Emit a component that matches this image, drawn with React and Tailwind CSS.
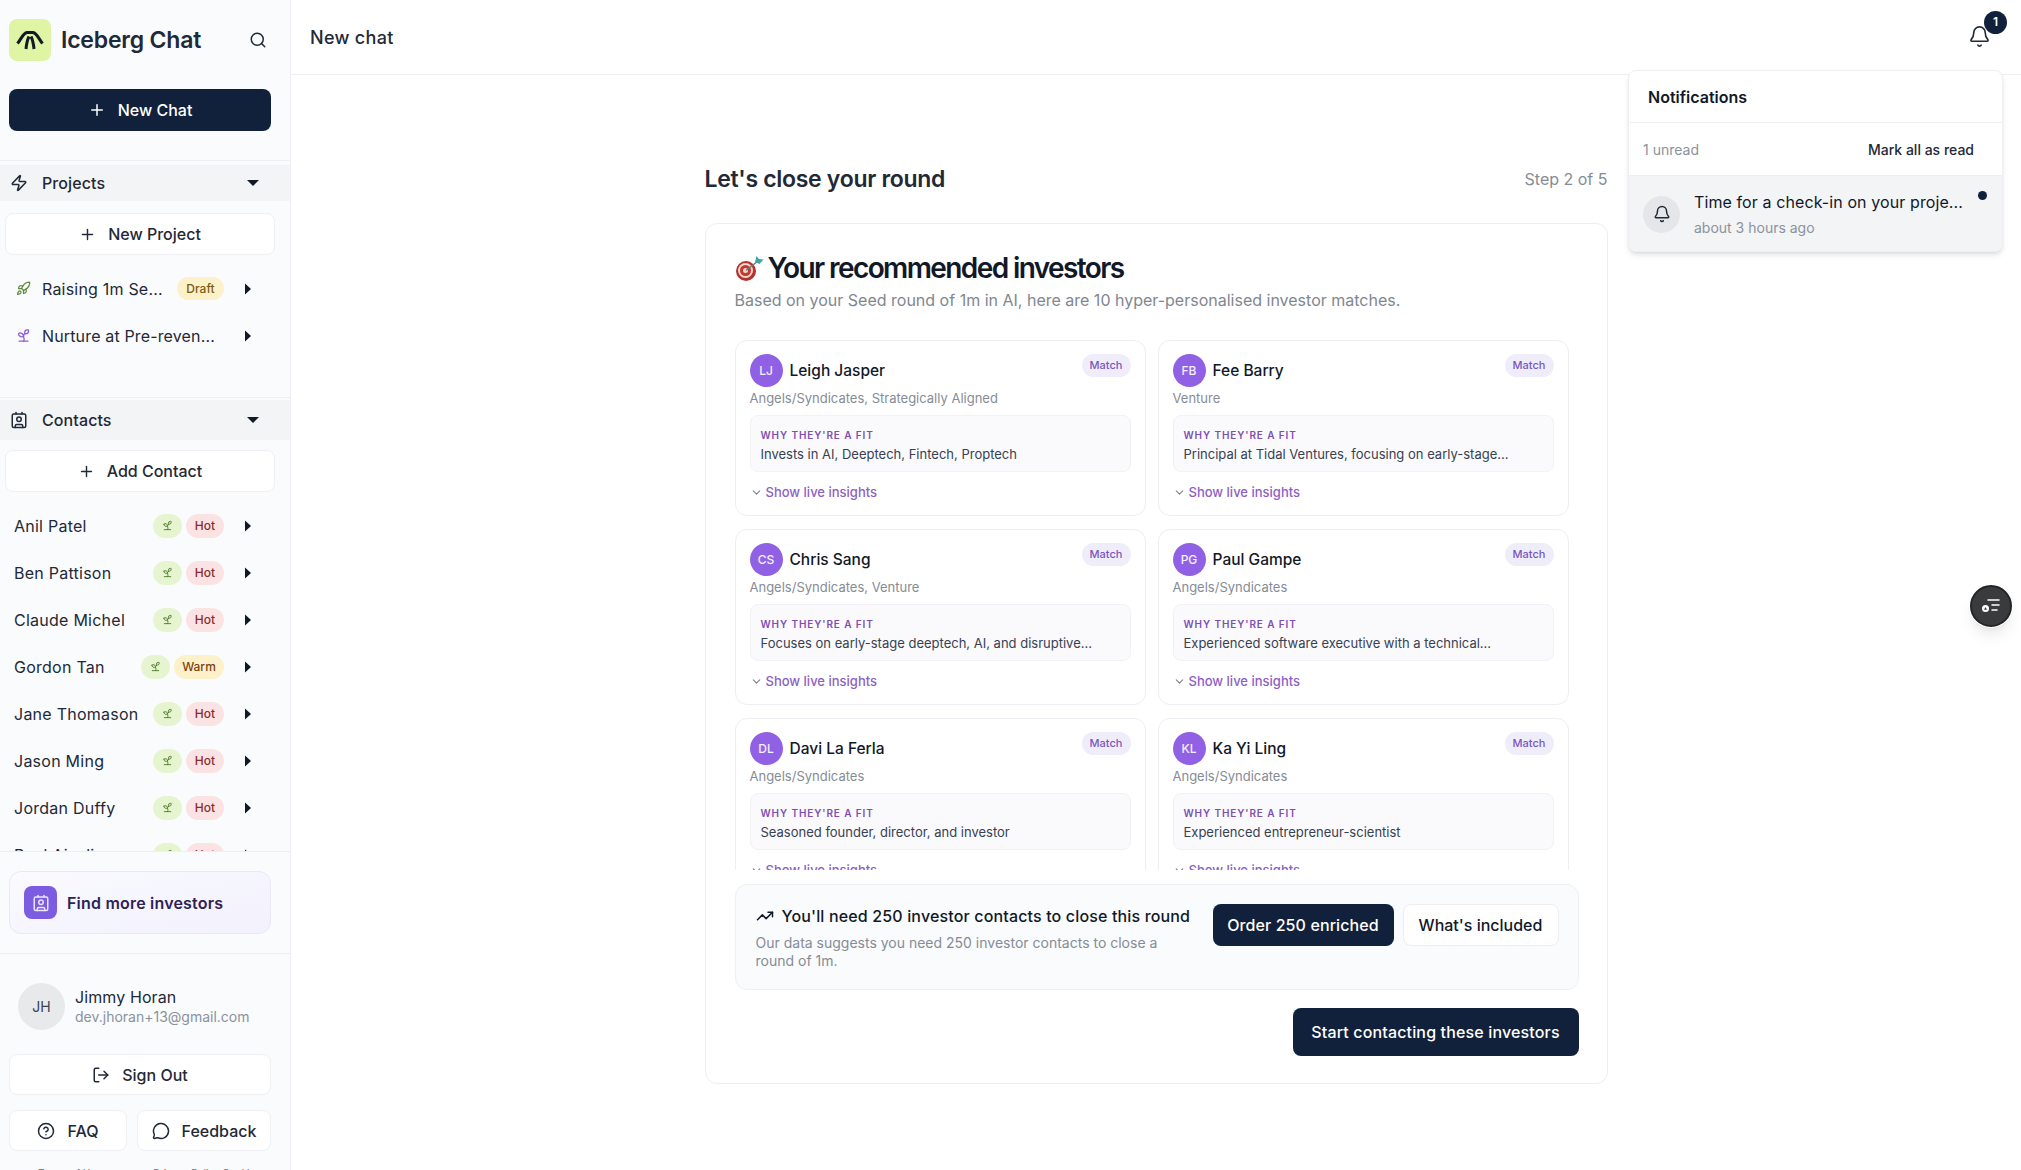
import React from 'react';
import { Search, Plus, Zap, Rocket, Sprout, Contact, LogOut, CircleHelp, MessageCircle, ChevronDown, TrendingUp, Bell } from 'lucide-react';

const contacts = [
  { name: 'Anil Patel', tag: 'Hot' },
  { name: 'Ben Pattison', tag: 'Hot' },
  { name: 'Claude Michel', tag: 'Hot' },
  { name: 'Gordon Tan', tag: 'Warm' },
  { name: 'Jane Thomason', tag: 'Hot' },
  { name: 'Jason Ming', tag: 'Hot' },
  { name: 'Jordan Duffy', tag: 'Hot' },
  { name: 'Paul Ainslie', tag: 'Hot' },
];

const investors = [
  { initials: 'LJ', name: 'Leigh Jasper', type: 'Angels/Syndicates, Strategically Aligned', fit: 'Invests in AI, Deeptech, Fintech, Proptech' },
  { initials: 'FB', name: 'Fee Barry', type: 'Venture', fit: "Principal at Tidal Ventures, focusing on early-stage..." },
  { initials: 'CS', name: 'Chris Sang', type: 'Angels/Syndicates, Venture', fit: 'Focuses on early-stage deeptech, AI, and disruptive...' },
  { initials: 'PG', name: 'Paul Gampe', type: 'Angels/Syndicates', fit: 'Experienced software executive with a technical...' },
  { initials: 'DL', name: 'Davi La Ferla', type: 'Angels/Syndicates', fit: 'Seasoned founder, director, and investor' },
  { initials: 'KL', name: 'Ka Yi Ling', type: 'Angels/Syndicates', fit: 'Experienced entrepreneur-scientist' },
];

function Caret({ down }) {
  return (
    <svg width="12" height="12" viewBox="0 0 12 12" className="shrink-0 text-[#111827]" fill="currentColor">
      {down ? <path d="M0 3h12L6 9z" /> : <path d="M3 .5v11L9 6z" />}
    </svg>
  );
}

function Logo() {
  return (
    <div className="w-[42px] h-[42px] rounded-lg bg-[#dff5a5] flex items-center justify-center shrink-0">
      <svg width="28" height="20" viewBox="0 0 28 20" fill="none" stroke="#111827" strokeWidth="3.200">
        <path d="M1.500 13.500C5 9.500 7 3 11 2.500H17C21 3 23 9.500 26.500 13.500" />
        <path d="M10 19C10.500 13.500 11.500 9.500 13 6.500" strokeWidth="3" />
        <path d="M18 19C17.500 13.500 16.500 9.500 15 6.500" strokeWidth="3" />
      </svg>
    </div>
  );
}

function SectionHead({ icon, label, className }) {
  return (
    <div className={`bg-[#f3f4f6] flex items-center pl-[10px] pr-[31px] text-[#1f2937] ${className}`}>
      {icon}
      <span className="ml-[14px] text-[16px] font-medium flex-1 tracking-[0.1px]">{label}</span>
      <Caret down />
    </div>
  );
}

function OutlineButton({ icon, children, className }) {
  return (
    <button className={`flex items-center justify-center gap-[12px] rounded-lg border border-[#eff0f3] bg-white text-[16px] font-medium text-[#1f2937] ${className}`}>
      {icon}
      {children}
    </button>
  );
}

function ContactRow({ name, tag }) {
  return (
    <div className="h-[47px] shrink-0 flex items-center pl-[14px] pr-[36px]">
      <span className="flex-1 truncate text-[16px] tracking-[0.25px] text-[#1f2937]">{name}</span>
      <span className="w-[29px] h-[24px] rounded-full bg-[#e6f5cf] flex items-center justify-center shrink-0">
        <Sprout size={11} className="text-[#4d7c2a]" />
      </span>
      <span className={`ml-[4px] h-[24px] rounded-full flex items-center justify-center text-[12px] font-medium shrink-0 ${tag === 'Hot' ? 'w-[38px] bg-[#fbe3e3] text-[#8a2b2b]' : 'w-[50px] bg-[#fdf1c9] text-[#7c3f12]'}`}>{tag}</span>
      <span className="ml-[18px]"><Caret /></span>
    </div>
  );
}

function Sidebar() {
  return (
    <aside className="w-[291px] h-full shrink-0 bg-[#fafbfd] border-r border-[#eeeff2] flex flex-col overflow-hidden">
      <div className="flex items-center pl-[9px] pr-[23px] pt-[19px]">
        <Logo />
        <span className="ml-[10px] flex-1 text-[23px] font-semibold text-[#1f2937] tracking-[-0.2px]">Iceberg Chat</span>
        <Search size={18} className="text-[#1f2937]" />
      </div>
      <button className="mt-[28px] ml-[9px] w-[262px] h-[42px] shrink-0 rounded-lg bg-[#12213b] text-white text-[16px] font-medium flex items-center justify-center gap-[12px]">
        <Plus size={18} />New Chat
      </button>

      <div className="mt-[29px] border-t border-[#eeeff2] pt-[4px]">
        <SectionHead icon={<Zap size={18} />} label="Projects" className="h-[36px]" />
      </div>
      <OutlineButton icon={<Plus size={17} />} className="mt-[12px] ml-[5px] w-[270px] h-[42px] shrink-0">New Project</OutlineButton>
      <div className="mt-[10px] pb-[38px]">
        <div className="h-[47px] flex items-center pl-[16px] pr-[36px]">
          <Rocket size={15} className="text-[#5f8a3a] shrink-0" />
          <span className="ml-[11px] flex-1 text-[16px] tracking-[0.2px] text-[#1f2937] whitespace-nowrap">Raising 1m Se...</span>
          <span className="w-[47px] h-[23px] rounded-full bg-[#fdf1c9] text-[#7c5a12] text-[12px] font-medium flex items-center justify-center">Draft</span>
          <span className="ml-[18px]"><Caret /></span>
        </div>
        <div className="h-[47px] flex items-center pl-[16px] pr-[36px]">
          <Sprout size={15} className="text-[#8a5cd6] shrink-0" />
          <span className="ml-[11px] flex-1 text-[16px] tracking-[0.15px] text-[#1f2937] whitespace-nowrap">Nurture at Pre-reven...</span>
          <Caret />
        </div>
      </div>

      <div className="border-t border-[#eeeff2] pt-[2px]">
        <SectionHead icon={<Contact size={18} />} label="Contacts" className="h-[40px]" />
      </div>
      <OutlineButton icon={<Plus size={17} />} className="mt-[10px] ml-[5px] w-[270px] h-[42px] shrink-0">Add Contact</OutlineButton>
      <div className="mt-[10px] flex-1 min-h-0 overflow-hidden flex flex-col">
        {contacts.map((c) => <ContactRow key={c.name} {...c} />)}
      </div>

      <div className="shrink-0 border-t border-[#eeeff2]">
        <div className="ml-[9px] w-[262px] mt-[19px] h-[63px] rounded-xl border border-[#e9e8f3] bg-gradient-to-br from-[#fafaff] to-[#f2f1fd] flex items-center pl-[14px]">
          <span className="w-[33px] h-[33px] rounded-lg bg-[#7c5ce0] flex items-center justify-center">
            <Contact size={18} className="text-[#e9e3fb]" />
          </span>
          <span className="ml-[10px] text-[16px] font-semibold tracking-[0.2px] text-[#2e2257]">Find more investors</span>
        </div>
        <div className="mt-[19px] border-t border-[#eeeff2] pt-[29px] pl-[18px] flex items-center">
          <span className="w-[47px] h-[47px] rounded-full bg-[#e8e9eb] flex items-center justify-center text-[14px] text-[#374151]">JH</span>
          <div className="ml-[10px]">
            <div className="text-[16px] leading-[20px] tracking-[0.1px] text-[#1f2937]">Jimmy Horan</div>
            <div className="text-[14px] leading-[20px] text-[#8b929c]">dev.jhoran+13@gmail.com</div>
          </div>
        </div>
        <OutlineButton icon={<LogOut size={18} />} className="mt-[24px] ml-[9px] w-[262px] h-[41px]">Sign Out</OutlineButton>
        <div className="mt-[15px] ml-[9px] w-[262px] flex gap-[10px]">
          <OutlineButton icon={<CircleHelp size={18} />} className="w-[118px] h-[41px]">FAQ</OutlineButton>
          <OutlineButton icon={<MessageCircle size={18} />} className="w-[134px] h-[41px]">Feedback</OutlineButton>
        </div>
        <div className="mt-[14px] h-[5px] overflow-hidden flex text-[10px] leading-[16px] text-[#6b7280]">
          <span className="ml-[38px]">Terms of Use</span>
          <span className="ml-[52px]">Privacy Policy Cookies</span>
        </div>
      </div>
    </aside>
  );
}

function InvestorCard({ initials, name, type, fit }) {
  return (
    <div className="h-[176px] shrink-0 rounded-xl border border-[#eceef1] bg-white pl-[14px] pr-[14px] pt-[13px]">
      <div className="flex items-start">
        <span className="w-[33px] h-[33px] rounded-full bg-[#9061e4] text-white/90 text-[12px] font-medium flex items-center justify-center">{initials}</span>
        <span className="ml-[7px] flex-1 text-[15.500px] leading-[33px] font-medium text-[#111827]">{name}</span>
        <span className="w-[49px] h-[23px] rounded-full bg-[#f0edfa] text-[#7a56bf] text-[11px] font-medium flex items-center justify-center">Match</span>
      </div>
      <div className="mt-[1px] text-[13px] leading-[20px] text-[#858c96]">{type}</div>
      <div className="mt-[7px] h-[57px] rounded-lg border border-[#f2f2f6] bg-[#fafafc] px-[10px] pt-[10px]">
        <div className="text-[10px] leading-[18px] font-semibold tracking-[0.9px] text-[#7e4fb3]">WHY THEY'RE A FIT</div>
        <div className="text-[13px] leading-[20px] text-[#374151]">{fit}</div>
      </div>
      <div className="mt-[10px] flex items-center text-[13px] leading-[20px] font-medium text-[#8d5fc4]">
        <ChevronDown size={13} className="text-[#7b8088]" />
        <span className="ml-[3px]">Show live insights</span>
      </div>
    </div>
  );
}

function TargetEmoji() {
  return (
    <svg width="30" height="28" viewBox="0 0 30 28">
      <circle cx="11" cy="17" r="10" fill="#b5322c" />
      <circle cx="10.500" cy="16.500" r="7.500" fill="#f2d6d0" />
      <circle cx="10.500" cy="16.500" r="5.500" fill="#c2392f" />
      <circle cx="10.500" cy="16.500" r="2.500" fill="#f2d6d0" />
      <path d="M11 16.500L23 7" stroke="#6a7a80" strokeWidth="1.500" />
      <path d="M20 8l1.500-6 2.500 3 4.500 .5-4 4.500z" fill="#3fa7a0" />
    </svg>
  );
}

function Notifications() {
  return (
    <div className="absolute top-[70px] right-[18px] w-[375px] h-[182px] rounded-lg border border-[#eeeff2] bg-white shadow-md overflow-hidden z-10">
      <div className="h-[52px] pl-[19px] flex items-center text-[16px] font-semibold text-[#111827] border-b border-[#eeeff2]">Notifications</div>
      <div className="h-[53px] pl-[14px] pr-[28px] flex items-center justify-between text-[14px] border-b border-[#eeeff2]">
        <span className="text-[#8b929c]">1 unread</span>
        <span className="font-medium text-[#1f2937]">Mark all as read</span>
      </div>
      <div className="relative h-[76px] bg-[#f3f4f6] pl-[14px] flex items-center">
        <span className="w-[37px] h-[37px] rounded-full bg-[#e5e6e9] flex items-center justify-center">
          <Bell size={18} className="text-[#1f2937]" />
        </span>
        <div className="ml-[14px]">
          <div className="text-[16px] leading-[24px] tracking-[0.1px] text-[#111827]">Time for a check-in on your proje...</div>
          <div className="mt-[4px] text-[14px] leading-[20px] text-[#8b929c]">about 3 hours ago</div>
        </div>
        <span className="absolute top-[15px] right-[15px] w-[9px] h-[9px] rounded-full bg-[#12213b]" />
      </div>
    </div>
  );
}

export default function App() {
  return (
    <div className="relative h-screen w-full overflow-hidden bg-white flex font-['Inter',sans-serif]">
      <Sidebar />
      <main className="flex-1 min-w-0 flex flex-col">
        <header className="h-[75px] shrink-0 border-b border-[#eeeff2] pl-[19px] pr-[30px] flex items-center justify-between">
          <span className="text-[18px] tracking-[0.3px] font-medium text-[#1f2937]">New chat</span>
          <span className="relative -mt-[2px]">
            <Bell size={23} strokeWidth={1.700} className="text-[#1f2937]" />
            <span className="absolute -top-[14px] left-[16px] w-[23px] h-[23px] rounded-full bg-[#12213b] text-white text-[12px] font-semibold flex items-center justify-center">1</span>
          </span>
        </header>

        <div className="w-[903px] mx-auto">
          <div className="mt-[87px] h-[34px] flex items-center justify-between">
            <h1 className="text-[23px] font-semibold text-[#1f2937] tracking-[-0.3px]">Let's close your round</h1>
            <span className="text-[16px] text-[#858c96]">Step 2 of 5</span>
          </div>
          <section className="mt-[27px] h-[861px] rounded-xl border border-[#eceef1] bg-white pl-[29px] pr-[28px] pt-[26px]">
            <div className="flex items-center gap-[3px] h-[36px]">
              <TargetEmoji />
              <h2 className="text-[28px] font-semibold text-[#111827] tracking-[-1.600px]">Your recommended investors</h2>
            </div>
            <p className="mt-[2px] text-[16px] leading-[24px] text-[#7f8790]">Based on your Seed round of 1m in AI, here are 10 hyper-personalised investor matches.</p>

            <div className="mt-[28px] h-[530px] overflow-hidden">
              <div className="w-[834px] grid grid-cols-2 gap-x-[12px] gap-y-[13px]">
                {investors.map((inv) => <InvestorCard key={inv.initials} {...inv} />)}
              </div>
            </div>

            <div className="mt-[14px] h-[106px] rounded-xl border border-[#eef0f3] bg-[#fafbfd] pl-[20px] pr-[19px] pt-[19px] flex items-start">
              <div className="flex-1">
                <div className="flex items-center gap-[8px] text-[16px] leading-[24px] tracking-[0.15px] font-medium text-[#111827]">
                  <TrendingUp size={18} />You'll need 250 investor contacts to close this round
                </div>
                <div className="mt-[6px] w-[420px] text-[14px] leading-[18px] text-[#858c96]">Our data suggests you need 250 investor contacts to close a round of 1m.</div>
              </div>
              <button className="h-[42px] w-[181px] rounded-lg bg-[#12213b] text-white text-[16px] tracking-[0.1px] font-medium">Order 250 enriched</button>
              <button className="ml-[9px] h-[42px] w-[156px] rounded-lg border border-[#eceef1] bg-white text-[#111827] text-[16px] font-medium">What's included</button>
            </div>

            <div className="mt-[18px] flex justify-end">
              <button className="h-[48px] w-[286px] rounded-lg bg-[#12213b] text-white text-[16px] tracking-[0.15px] font-medium">Start contacting these investors</button>
            </div>
          </section>
        </div>
      </main>

      <Notifications />

      <button className="absolute top-[585px] right-[9px] w-[42px] h-[42px] rounded-full bg-[#3a3b3c] border-2 border-[#242526] ring-1 ring-white shadow-lg flex items-center justify-center">
        <svg width="24" height="20" viewBox="0 0 24 20" fill="none" stroke="#fff" strokeWidth="1.500" strokeLinecap="round">
          <path d="M9 4h11M13 9h7M13 14h5" />
          <circle cx="6.500" cy="12.500" r="3.500" fill="#fff" stroke="none" />
          <path d="M6.500 11l1.500 2.800H5z" fill="#3a3b3c" stroke="none" />
        </svg>
      </button>
    </div>
  );
}
